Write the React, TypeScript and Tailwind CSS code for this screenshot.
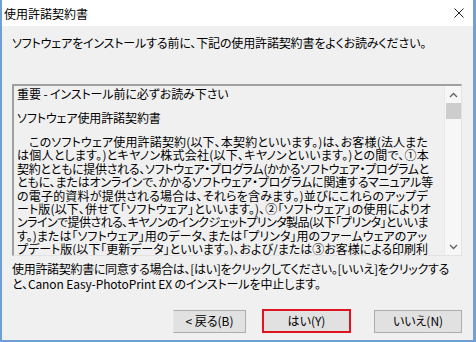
import React, { useLayoutEffect, useRef, useState } from "react";

const lines: [string, number][] = [
  ["　このソフトウェア使用許諾契約(以下、本契約といいます。)は、お客様(法人また", 411],
  ["は個人とします。)とキヤノン株式会社(以下、キヤノンといいます。)との間で、①本", 412],
  ["契約とともに提供される、ソフトウェア・プログラム(かかるソフトウェア・プログラムと", 412],
  ["ともに、またはオンラインで、かかるソフトウェア・プログラムに関連するマニュアル等", 416],
  ["の電子的資料が提供される場合は、それらを含みます。)並びにこれらのアップデ", 411],
  ["ート版(以下、併せて「ソフトウェア」といいます。)、②「ソフトウェア」の使用によりオ", 414],
  ["ンラインで提供される、キヤノンのインクジェットプリンタ製品(以下「プリンタ」といいま", 411],
  ["す。)または「ソフトウェア」用のデータ、または「プリンタ」用のファームウェアのアッ", 410],
  ["プデート版(以下「更新データ」といいます。)、および/または③お客様による印刷利", 411],
];

function FitLine({ text, width, className }: { text: string; width: number; className?: string }) {
  const ref = useRef<HTMLSpanElement>(null);
  const [ls, setLs] = useState(0);
  useLayoutEffect(() => {
    const el = ref.current;
    if (!el) return;
    el.style.letterSpacing = "0px";
    const w = el.getBoundingClientRect().width;
    const n = Array.from(text).length;
    setLs((width - w) / n);
  }, [text, width]);
  return (
    <div className={className}>
      <span ref={ref} className="inline-block whitespace-nowrap" style={{ letterSpacing: `${ls}px` }}>
        {text}
      </span>
    </div>
  );
}

export default function App() {
  const font = { fontFamily: '"Noto Sans CJK JP", "Noto Sans", sans-serif' };
  return (
    <div
      className="w-[476px] h-[342px] overflow-hidden bg-[#f0f0f0] border-l-2 border-r-[3px] border-b-2 border-[#6f9fd3] flex flex-col text-black [font-feature-settings:'palt']"
      style={font}
    >
      {/* Title bar */}
      <div className="h-[26px] bg-white flex items-center justify-between pl-[2px] pr-[9px] shrink-0">
        <span className="text-[12px] leading-none pt-[1px]">使用許諾契約書</span>
        <svg width="10" height="10" viewBox="0 0 10 10">
          <path d="M0.5 0.5 L9.5 9.5 M9.5 0.5 L0.5 9.5" stroke="#222" strokeWidth="1" />
        </svg>
      </div>

      <div className="flex flex-col pl-[10px] pr-[11px]">
        <div className="h-[34px] flex items-center text-[12px] tracking-[-0.15px] whitespace-nowrap">
          ソフトウェアをインストールする前に、下記の使用許諾契約書をよくお読みください。
        </div>

        {/* Text box */}
        <div className="mt-[24px] h-[172px] flex border-t-2 border-l-2 border-[#a0a0a0] border-b border-r border-b-[#e3e3e3] border-r-[#e3e3e3]">
          <div className="flex-1 pl-[3px] pt-[1px] text-[12px] whitespace-nowrap overflow-hidden">
            <div className="h-[13px] leading-[13px] tracking-[-0.1px]">重要 - インストール前に必ずお読み下さい</div>
            <div className="h-[11px]" />
            <div className="h-[13px] leading-[13px] tracking-[-0.1px]">ソフトウェア使用許諾契約書</div>
            <div className="h-[11px]" />
            {lines.map(([l, w], i) => (
              <FitLine key={i} text={l} width={w} className="h-[13.4px] leading-[13.4px]" />
            ))}
          </div>
          {/* Scrollbar */}
          <div className="w-[17px] bg-[#f7f7f7] border-l border-[#e8e8e8] flex flex-col items-center">
            <div className="h-[17px] flex items-center justify-center">
              <svg width="9" height="6" viewBox="0 0 9 6">
                <path d="M1 5 L4.5 1.5 L8 5" stroke="#606060" strokeWidth="1.3" fill="none" />
              </svg>
            </div>
            <div className="w-[15px] h-[16px] bg-[#cdcdcd]" />
            <div className="flex-1" />
            <div className="h-[17px] flex items-center justify-center">
              <svg width="9" height="6" viewBox="0 0 9 6">
                <path d="M1 1 L4.5 4.5 L8 1" stroke="#606060" strokeWidth="1.3" fill="none" />
              </svg>
            </div>
          </div>
        </div>

        <div className="mt-[5px] text-[12px] leading-[15px] whitespace-nowrap">
          <FitLine text="使用許諾契約書に同意する場合は、[はい]をクリックしてください。[いいえ]をクリックする" width={437} />
          <div className="tracking-[-0.1px]">と、Canon Easy-PhotoPrint EX のインストールを中止します。</div>
        </div>

        <div className="mt-[18px] flex justify-end items-center text-[12px]">
          <button className="w-[73px] h-[23px] bg-[#e1e1e1] border border-[#adadad] border-l-[#e8e8e8] flex items-center justify-center">
            &lt; 戻る(B)
          </button>
          <button className="ml-[16px] w-[89px] h-[24px] bg-[#e1e1e1] border-2 border-[#e0141e] flex items-center justify-center">
            はい(Y)
          </button>
          <button className="ml-[23px] w-[88px] h-[23px] bg-[#e1e1e1] border border-[#adadad] flex items-center justify-center">
            いいえ(N)
          </button>
        </div>
      </div>
    </div>
  );
}
